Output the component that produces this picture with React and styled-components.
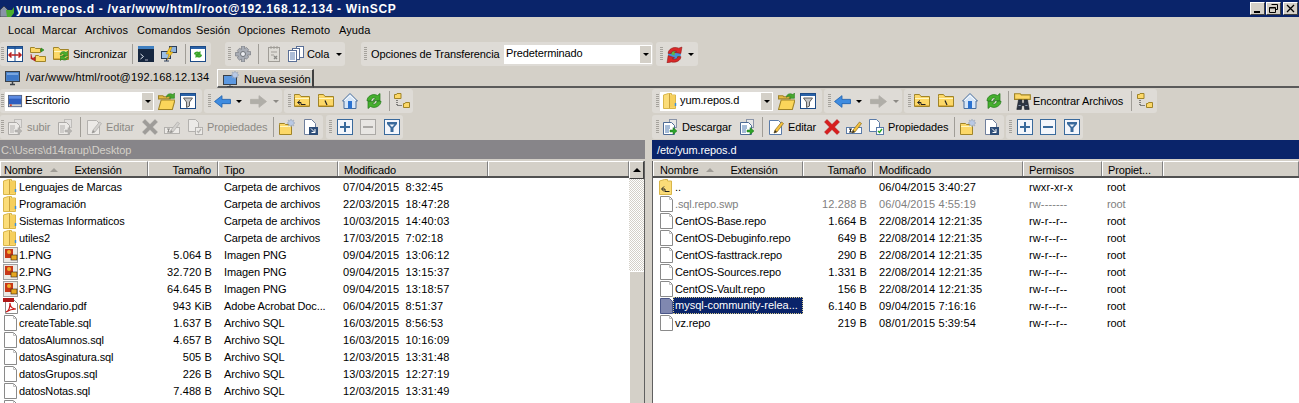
import React from 'react';
import styled, { createGlobalStyle } from 'styled-components';

const GlobalStyle = createGlobalStyle`
    html, body {
        margin: 0;
        padding: 0;
        background: #d4d0c8;
    }
    body {
        font-family: "Liberation Sans", Arial, sans-serif;
        font-size: 11px;
        letter-spacing: -0.12px;
        color: #000;
    }
`;

// Window chrome
const Window = styled.div`
    display: flex;
    flex-direction: column;
    width: 1299px;
    height: 403px;
    overflow: hidden;
    background: #d4d0c8;
`;

const TitleBar = styled.div`
    display: flex;
    align-items: center;
    flex: none;
    height: 17px;
    background: #0a246a;
    color: #fff;
    font-weight: bold;
    padding-right: 1px;
`;

const TitleText = styled.span`
    flex: 1;
    margin-left: 1px;
    font-size: 12px;
    letter-spacing: 0.68px;
`;

const WinButton = styled.div`
    display: flex;
    align-items: center;
    justify-content: center;
    width: 15px;
    height: 13px;
    margin-left: ${p => p.$ml || 0}px;
    background: #d4d0c8;
    border-top: 1px solid #fff;
    border-left: 1px solid #fff;
    border-right: 1px solid #404040;
    border-bottom: 1px solid #404040;
    box-sizing: border-box;
`;

const MenuBar = styled.div`
    display: flex;
    flex: none;
    align-items: center;
    height: 25px;
    padding-left: 8px;
`;

const MenuItem = styled.span`
    width: ${p => p.$w}px;
    letter-spacing: 0.1px;
`;

const ToolRow = styled.div`
    display: flex;
    flex: none;
    height: 24px;
    margin-bottom: ${p => p.$mb || 0}px;
`;

const Band = styled.div`
    display: flex;
    align-items: center;
    flex: none;
    box-sizing: border-box;
    width: ${p => p.$w}px;
    margin-right: ${p => p.$mr || 0}px;
    padding-left: ${p => p.$pl ?? 1}px;
    background: #dedbd6;
    border-radius: 3px;
`;

const Grip = styled.i`
    flex: none;
    width: 3px;
    height: 14px;
    background: repeating-linear-gradient(#a5a29c 0 1px, transparent 1px 2px);
`;

const Tool = styled.div`
    display: flex;
    align-items: center;
    flex: none;
    padding: 0 ${p => p.$pr ?? 4}px 0 ${p => p.$lp ?? 3}px;
`;

const Label = styled.span`
    flex: none;
    width: ${p => p.$w}px;
    margin-left: ${p => p.$ml ?? 4}px;
    white-space: nowrap;
    color: ${p => (p.$off ? '#8c8a85' : '#000')};
`;

const Sep = styled.i`
    flex: none;
    width: 1px;
    height: 20px;
    margin: 0 ${p => p.$r ?? 1}px 0 ${p => p.$l ?? 4}px;
    background: #a09d97;
`;

const Caret = styled.i`
    flex: none;
    width: 0;
    height: 0;
    margin: 1px ${p => p.$r || 0}px 0 ${p => p.$l || 0}px;
    border-left: 3px solid transparent;
    border-right: 3px solid transparent;
    border-top: 3px solid ${p => (p.$off ? '#8c8a85' : '#000')};
`;

const Select = styled.div`
    display: flex;
    align-items: center;
    flex: none;
    box-sizing: border-box;
    width: ${p => p.$w}px;
    height: 19px;
    margin-left: ${p => p.$ml || 0}px;
    padding-left: ${p => p.$pl || 2}px;
    background: #fff;
`;

const SelectText = styled.span`
    flex: 1;
    margin-left: ${p => p.$ml || 0}px;
    padding-bottom: 2px;
`;

const SelectArrow = styled.div`
    display: flex;
    align-items: center;
    justify-content: center;
    width: 11px;
    height: 17px;
    margin-right: 1px;
    background: #d4d0c8;
`;

// Tabs
const TabStrip = styled.div`
    display: flex;
    flex: none;
    height: 22px;
`;

const ActiveTab = styled.div`
    display: flex;
    align-items: flex-start;
    box-sizing: border-box;
    width: 217px;
    padding: 4px 0 0 5px;
`;

const IdleTab = styled.div`
    display: flex;
    align-items: flex-start;
    box-sizing: border-box;
    width: 97px;
    height: 19px;
    margin-top: 3px;
    padding: 1px 0 0 5px;
    background: #d4d0c8;
    border-top: 1px solid #fff;
    border-left: 1px solid #fff;
    border-right: 2px solid #404040;
    border-bottom: 2px solid #5a5a5a;
`;

const TabText = styled.span`
    margin-top: ${p => p.$mt || 1}px;
    margin-left: ${p => p.$ml}px;
    white-space: nowrap;
    letter-spacing: ${p => p.$ls ?? 0.14}px;
`;

const TabFill = styled.div`
    flex: 1;
    border-bottom: 2px solid #5a5a5a;
`;

// Panels
const Panels = styled.div`
    display: flex;
    flex: 1;
    min-height: 0;
    padding-top: 1px;
`;

const Panel = styled.section`
    display: flex;
    flex-direction: column;
    flex: none;
    width: ${p => p.$w}px;
    min-width: 0;
`;

const Splitter = styled.div`
    flex: none;
    width: 7px;
`;

const PathBar = styled.div`
    flex: none;
    height: 19px;
    line-height: 21px;
    padding-left: ${p => p.$pl}px;
    margin-top: 1px;
    background: ${p => (p.$active ? '#0a246a' : '#878589')};
    color: ${p => (p.$active ? '#fff' : '#d4d0c8')};
`;

const ListFrame = styled.div`
    display: flex;
    flex: 1;
    min-height: 0;
    margin-top: 2px;
    background: #fff;
    border-left: ${p => (p.$framed ? '1px solid #606060' : 'none')};
    border-right: ${p => (p.$scroll ? '1px solid #606060' : 'none')};
`;

const ListBody = styled.div`
    flex: 1;
    min-width: 0;
`;

const HeaderRow = styled.div`
    display: flex;
    box-sizing: border-box;
    height: 17px;
    background: #d4d0c8;
    border-bottom: 2px solid #505050;
`;

const HeaderCell = styled.div`
    display: flex;
    align-items: center;
    box-sizing: border-box;
    width: ${p => p.$w}px;
    flex: ${p => (p.$w ? 'none' : 1)};
    padding-left: ${p => p.$pl ?? 5}px;
    padding-right: 6px;
    padding-top: 1px;
    justify-content: ${p => (p.$right ? 'flex-end' : 'flex-start')};
    border-top: 1px solid #fff;
    border-left: 1px solid #fff;
    border-right: 1px solid #808080;
`;

const SortMark = styled.i`
    width: 0;
    height: 0;
    margin: 0 16px 0 8px;
    border-left: 4px solid transparent;
    border-right: 4px solid transparent;
    border-bottom: 4px solid #a09d97;
`;

const FileRow = styled.div`
    display: flex;
    align-items: center;
    height: 17px;
    color: ${p => (p.$dim ? '#808080' : '#000')};
`;

const NameCell = styled.div`
    display: flex;
    align-items: center;
    flex: none;
    box-sizing: border-box;
    width: ${p => p.$w}px;
    padding-left: ${p => p.$pl}px;
`;

const NameText = styled.span`
    white-space: nowrap;
    ${p => p.$selected && `
        box-sizing: border-box;
        width: 130px;
        height: 17px;
        margin-left: -2px;
        padding: 0 1px;
        line-height: 15px;
        color: #fff;
        background: #0a246a;
        border: 1px dotted #d4c98a;
        letter-spacing: 0px;
    `}
`;

const Cell = styled.div`
    flex: none;
    box-sizing: border-box;
    width: ${p => p.$w}px;
    padding-left: ${p => p.$pl ?? 6}px;
    padding-right: ${p => (p.$right ? 6 : 0)}px;
    text-align: ${p => (p.$right ? 'right' : 'left')};
    letter-spacing: ${p => (p.$num ? '0.12px' : 'inherit')};
    white-space: pre;
    overflow: hidden;
`;

const Scrollbar = styled.div`
    display: flex;
    flex-direction: column;
    flex: none;
    box-sizing: border-box;
    width: 15px;
    height: 100%;
`;

const ScrollButton = styled.div`
    display: flex;
    align-items: center;
    justify-content: center;
    flex: none;
    height: 16px;
    background: #d4d0c8;
    border-top: 1px solid #fff;
    border-left: 1px solid #fff;
    border-right: 1px solid #404040;
    border-bottom: 1px solid #404040;
`;

const ScrollTrack = styled.div`
    flex: none;
    height: 92px;
    background: repeating-conic-gradient(#fff 0 25%, #d4d0c8 0 50%) 0 0 / 2px 2px;
`;

const ScrollThumb = styled.div`
    flex: 1;
    background: #d4d0c8;
    border-top: 1px solid #fff;
    border-left: 1px solid #fff;
`;

const UpArrow = styled.i`
    width: 0;
    height: 0;
    border-left: 4px solid transparent;
    border-right: 4px solid transparent;
    border-bottom: 4px solid #000;
`;

const Svg = styled.svg`
    display: block;
    flex: none;
    ${p => p.$off && 'filter: grayscale(1) opacity(0.42);'}
`;

const AppMark = styled(Svg)`
    align-self: flex-end;
`;

const folder = (
    <>
        <path d="M.5 3.500v-2h5l1.500 2h8.500v10H.5z" fill="#fcd868" stroke="#a08428" />
        <path d="M1 5.500h14" stroke="#fff6c0" />
        <path d="M1 12.500h14" stroke="#e0b040" />
    </>
);

const greenArrows = (
    <>
        <path d="M7 8.500c.5-3 4-4 6-2l1.500-1.500v5h-5l1.500-1.500c-1-1-2.500-1-3 .5z" fill="#4caf2e" stroke="#23761a" strokeWidth=".6" />
        <path d="M15 11c-.5 3-4 4-6 2l-1.500 1.500v-4.500h5L11 11.500c1 1 2.500 1 3-.5z" fill="#4caf2e" stroke="#23761a" strokeWidth=".6" />
    </>
);

const doc = (
    <path d="M2.500.5h7l4 4v11h-11z" fill="#fff" stroke="#6f7f9c" />
);

const pencil = (
    <>
        <path d="M7 11l6.500-8 2 1.500L9 13l-3 1z" fill="#f5c23e" stroke="#8a6a1c" strokeWidth=".7" />
        <path d="M6 14l1-3 2 2z" fill="#333" />
    </>
);

const framed = inner => (
    <>
        <rect x=".5" y=".5" width="15" height="15" fill="#f4f6fb" stroke="#3a6a9c" />
        {inner}
    </>
);

const ICONS = {
    compare: (
        <>
            <rect x=".5" y=".5" width="15" height="15" fill="#fff" stroke="#1c4a86" />
            <rect x="1" y="1" width="14" height="2" fill="#2a62a8" />
            <path d="M8 1v14" stroke="#1c4a86" />
            <path d="M2 9h12M4.500 6.500 2 9l2.500 2.500M11.500 6.500 14 9l-2.500 2.500" stroke="#b82020" strokeWidth="1.500" fill="none" />
        </>
    ),
    syncFolders: (
        <>
            <path d="M.5 6.500v-5h4l1 1h5v4z" fill="#fcd868" stroke="#a08428" />
            <path d="M5.500 15.500v-6h3l1 1h6v5z" fill="#fcd868" stroke="#a08428" />
            <path d="M11 2l3 2-3 2zM11 4h-1" fill="#3ba52a" stroke="#23761a" strokeWidth=".6" />
            <path d="M5 11l-3 2 3 2zM1 8v5h2" fill="#d02424" stroke="#a01818" strokeWidth=".6" />
        </>
    ),
    folderSync: <>{folder}{greenArrows}</>,
    terminal: (
        <>
            <rect width="16" height="16" fill="#16263e" />
            <rect width="16" height="3" fill="#3f7fc0" />
            <path d="M2.500 8l3 2.500-3 2.500" stroke="#dfe6ee" fill="none" />
            <path d="M7 14h3" stroke="#aab" />
        </>
    ),
    putty: (
        <>
            <rect x="8.500" y=".5" width="7" height="6" fill="#8fb4dc" stroke="#2c3e5a" />
            <rect x=".5" y="5.500" width="9" height="7" fill="#9cc0e6" stroke="#2c3e5a" />
            <path d="M3 15h5M5.500 12.500V15" stroke="#2c3e5a" />
            <path d="M9 1 5 8h3l-2 6 6-8H9l2-5z" fill="#f5c828" stroke="#a87c10" strokeWidth=".5" />
        </>
    ),
    syncBox: (
        <>
            <rect x=".5" y=".5" width="15" height="15" fill="#fff" stroke="#1c4a86" />
            <rect x="1" y="1" width="14" height="2" fill="#2a62a8" />
            <path d="M4 8c0-2 3-3.500 5-2l1.500-1v4h-4l1-1c-1-.5-2 0-2 1z" fill="#3ba52a" />
            <path d="M12 9c0 2-3 3.500-5 2l-1.500 1V8h4l-1 1c1 .5 2 0 2-1z" fill="#3ba52a" />
        </>
    ),
    gear: (
        <>
            <path d="M6.500 0h3v2.500l2-1 2.200 2.200-1.200 1.800h3v3.500h-3l1.200 2-2.200 2.200-2-1.200V16h-3v-3l-2 1.200L2.300 12l1.200-2H.5V6.500h3L2.300 4.500 4.500 2.300l2 1z" fill="#a9adb5" stroke="#6e7278" strokeWidth=".6" />
            <circle cx="8" cy="8" r="2.500" fill="#eceef2" stroke="#6e7278" />
        </>
    ),
    checklist: (
        <>
            <rect x="2.500" y="1.500" width="11" height="14" fill="#dedcd6" stroke="#a09d97" />
            <path d="M5 0v3M8 0v3M11 0v3M5 6h6M5 9h3" stroke="#a09d97" />
            <path d="M8 10l3 3M11 10l-3 3" stroke="#8a8a86" strokeWidth="1.400" />
        </>
    ),
    queue: (
        <>
            <rect x="8.500" y=".5" width="7" height="11" fill="#fff" stroke="#5a6f96" />
            <rect x="4.500" y="2.500" width="7" height="11" fill="#fff" stroke="#5a6f96" />
            <rect x=".5" y="4.500" width="8" height="11" fill="#fff" stroke="#5a6f96" />
            <path d="M2 7h5M2 9h5M2 11h5M2 13h5" stroke="#5a7cb0" />
        </>
    ),
    globeSync: (
        <>
            <circle cx="8" cy="8" r="6" fill="#4a90d8" />
            <path d="M5 4l4 1-1 4-3-1zM10 10l3-1-1 4z" fill="#5ab848" />
            <path d="M2 7c0-4 5-7 10-5l3-1-1 6-6-1 2-1C7 4 5 5 5 7z" fill="#d82828" stroke="#8a1414" strokeWidth=".5" />
            <path d="M14 10c0 4-5 6-9 5l-4 1 1-7 6 2-2 1c3 1 5 0 5-2z" fill="#d82828" stroke="#8a1414" strokeWidth=".5" />
        </>
    ),
    monitor: (
        <>
            <rect x=".5" y="1.500" width="14" height="10" fill="#4a80c4" stroke="#3a4048" />
            <rect x="2" y="3" width="11" height="7" fill="#3d78c8" />
            <path d="M2 3h11v2H2z" fill="#79a6e0" />
            <path d="M5 14.500h5M7.500 12v2" stroke="#3a4048" strokeWidth="1.500" />
        </>
    ),
    newSession: (
        <>
            <rect x=".5" y="4.500" width="13" height="9" fill="#5c98e0" stroke="#3a4048" />
            <path d="M4 15.500h6M7 14v1" stroke="#3a4048" />
            <path d="M12 0l1 2 2-1-1 2 2 1-2 1 1 2-2-1-1 2-1-2-2 1 1-2-2-1 2-1-1-2 2 1z" fill="#b9c9e4" stroke="#8795ad" strokeWidth=".4" />
        </>
    ),
    desktop: (
        <>
            <rect x=".5" y="1.500" width="14" height="12" fill="#2f5fc0" stroke="#506080" />
            <rect x="1" y="11" width="13" height="2" fill="#d4d0c8" />
            <rect x="2" y="11" width="2" height="2" fill="#d04030" />
            <path d="M1 2h13v3H1z" fill="#5d8ae0" />
        </>
    ),
    openFolder: (
        <>
            <path d="M.5 4.500v-2h4l1 1h6v2H.5z" fill="#e8bb40" stroke="#a08428" />
            <path d="M.5 15.500 3 6.500h13l-2.500 9z" fill="#fbd65a" stroke="#a08428" />
            <path d="M8 3c1-2.500 4-3 6-1.500L15.500 0v5h-5l1.500-1.500C10.500 2.500 9 3 8 4z" fill="#46a82e" stroke="#23761a" strokeWidth=".5" />
        </>
    ),
    filter: (
        <>
            <rect x=".5" y=".5" width="15" height="15" fill="#fff" stroke="#1c4a86" />
            <rect x="1" y="1" width="14" height="2" fill="#2a62a8" />
            <path d="M3.500 5h9L9.500 9v4l-3 1.500V9z" fill="#c4c4c4" stroke="#5e5e5e" />
        </>
    ),
    back: <path d="M.5 8l7-5.500V6h8v4h-8v3.500z" fill="#3f8ce0" stroke="#1f62b0" strokeWidth=".8" />,
    forward: <path d="M15.500 8l-7-5.500V6H.5v4h8v3.500z" fill="#b0aea8" stroke="#b0aea8" strokeWidth=".8" />,
    parentDir: (
        <>
            {folder}
            <path d="M6 7.500 3.500 9.500 6 11.500M4 9.500h3v2h4.500" fill="none" stroke="#222" />
        </>
    ),
    rootDir: (
        <>
            {folder}
            <path d="M7 7.500l2 4.500" stroke="#222" strokeWidth="1.200" />
        </>
    ),
    home: (
        <>
            <path d="M.5 8 8 .5 15.500 8H14v7.500H2V8z" fill="#d6e6f8" stroke="#4a6f9c" />
            <path d="M2.500 7.500 8 2.500l5.500 5" fill="none" stroke="#fff" />
            <rect x="6" y="8" width="4" height="7.500" fill="#2a72d0" />
        </>
    ),
    refresh: (
        <>
            <path d="M1 8C1 3 7 0 11.500 2.500L14 .5v7H7l2.500-2.500C7 4 5 6 5 8z" fill="#46b02e" stroke="#23761a" strokeWidth=".7" />
            <path d="M15 8c0 5-6 8-10.500 5.500L2 15.500v-7h7l-2.500 2.500c2.500 1 4.500-1 4.500-3z" fill="#46b02e" stroke="#23761a" strokeWidth=".7" />
        </>
    ),
    tree: (
        <>
            <path d="M.5 5.500v-4h2l.5-1h4v5z" fill="#fcd868" stroke="#a08428" />
            <path d="M9.500 14.500v-4h1.500l.5-1h4v5z" fill="#fcd868" stroke="#a08428" />
            <path d="M3 7v5.500h5" stroke="#222" strokeDasharray="1 1" fill="none" />
        </>
    ),
    sendDoc: (
        <>
            <rect x="7.500" y=".5" width="7" height="8" fill="#e8e8e8" stroke="#8a94a8" />
            <path d="M1.500 3.500h8l3 3v9h-11z" fill="#fff" stroke="#4d6a94" />
            <path d="M3 7h5M3 9h5M3 11h4M3 13h4" stroke="#4d78b0" />
            <path d="M8 11h3V8.500l4 3.500-4 3.500V13H8z" fill="#2ea32a" stroke="#1f7a1c" strokeWidth=".5" />
        </>
    ),
    editDoc: (
        <>
            <path d="M1.500 1.500h9l3 3v11h-12z" fill="#fff" stroke="#5a7ba8" />
            {pencil}
        </>
    ),
    cross: <path d="M.5 3 3 .5l5 5 5-5L15.500 3l-5 5 5 5-2.500 2.500-5-5-5 5L.5 13l5-5z" fill="#d81e1e" stroke="#a81414" strokeWidth=".5" />,
    rename: (
        <>
            <rect x=".5" y="8.500" width="15" height="6" fill="#fff" stroke="#5a7ba8" />
            <path d="M3 10h3M3 13h3M4.500 10v3" stroke="#222" />
            {pencil}
        </>
    ),
    props: (
        <>
            <path d="M1.500.5h7l3 3v9h-10z" fill="#fff" stroke="#5a7ba8" />
            <rect x="8.500" y="8.500" width="7" height="7" fill="#fff" stroke="#5a7ba8" />
            <path d="M10 12l1.500 1.500L14 10" stroke="#28a428" strokeWidth="1.400" fill="none" />
        </>
    ),
    newFolder: (
        <>
            <path d="M.5 5.500v-1h5l1 1h6v10H.5z" fill="#fcd868" stroke="#a08428" />
            <path d="M1 7.500h11" stroke="#fff6c0" />
            <path d="M12 0l1 2 2-1-1 2 2 1-2 1 1 2-2-1-1 2-1-2-2 1 1-2-2-1 2-1-1-2 2 1z" fill="#b9c9e4" stroke="#8795ad" strokeWidth=".4" />
        </>
    ),
    shortcut: (
        <>
            {doc}
            <rect x="7" y="8" width="9" height="8" fill="#2d4d78" />
            <path d="M9 9.500l4 4M13 10v3.500H9.500" stroke="#fff" fill="none" />
        </>
    ),
    plus: framed(<path d="M8 3v10M3 8h10" stroke="#3a6a9c" strokeWidth="2" />),
    minus: framed(<path d="M3 8h10" stroke="#3a6a9c" strokeWidth="2" />),
    filterBox: framed(<path d="M3 3h10v2L9.500 9v4h-3V9L3 5zM5.500 5.500h5L8 8z" fill="#3a6a9c" fillRule="evenodd" />),
    binoculars: (
        <>
            <path d="M.5 6.500v-5h5l1 1h8v4z" fill="#fcd868" stroke="#a08428" />
            <path d="M4 7h3v3h2V7h3l1.500 8.500h-4L9 12H7l-.500 3.500h-4z" fill="#2c3442" stroke="#111820" strokeWidth=".5" />
            <path d="M4 12h2M10 12h2" stroke="#8a9ab0" />
        </>
    ),
    tallFolder: (
        <>
            <path d="M.5 15.500V2l5-1.500h3V2h4v13.500z" fill="#fbdc78" stroke="#d9b64a" />
            <path d="M6.500 15V1" stroke="#caa23c" />
            <path d="M7 2.500h5v12H7z" fill="#f6cf5c" />
            <path d="M12.500 10v3" stroke="#3c8ed8" strokeWidth="1.500" />
        </>
    ),
    upFolder: (
        <>
            <path d="M.5 15.500V2l5-1.500h3V2h4v13.500z" fill="#fbdc78" stroke="#d9b64a" />
            <path d="M5 7.500 2.500 10 5 12.500M3 10h3v2.500h4.500" fill="none" stroke="#222" />
        </>
    ),
    file: (
        <>
            <path d="M1.500.5h9l3 3v12h-12z" fill="#fff" stroke="#8a8a8a" />
            <path d="M10.500.5v3h3" fill="none" stroke="#c0c0c0" />
        </>
    ),
    fileSelected: <path d="M1.500.5h9l3 3v12h-12z" fill="#8088b0" stroke="#4a5688" />,
    png: (
        <>
            <rect x=".5" y=".5" width="14" height="15" fill="#ece9e4" stroke="#a0a0a0" />
            <rect x="2" y="2" width="8" height="9" fill="#c83818" />
            <circle cx="6" cy="5" r="2" fill="#f0b030" />
            <rect x="8" y="8" width="6" height="5" fill="#e8a820" stroke="#302010" strokeWidth=".6" />
        </>
    ),
    pdf: (
        <>
            <path d="M2.500 1.500h8l4 4v10h-12z" fill="#fff" stroke="#8a8a8a" />
            <rect x="0" y="0" width="11" height="4" fill="#b01818" />
            <path d="M3 14c3-1 4-5 4-9 0 4 3 6 6 6-3 0-7 1-10 3z" fill="none" stroke="#c81818" strokeWidth="1.200" />
        </>
    ),
};

const Icon = ({ name, size = 16, off }) => (
    <Svg width={size} height={size} viewBox="0 0 16 16" $off={off}>
        {ICONS[name]}
    </Svg>
);

const COLS_L = [148, 70, 120, 150];
const COLS_R = [150, 70, 150, 79, 61];

const LOCAL = [
    ['tallFolder', 'Lenguajes de Marcas', '', 'Carpeta de archivos', '07/04/2015  8:32:45'],
    ['tallFolder', 'Programación', '', 'Carpeta de archivos', '22/03/2015  18:47:28'],
    ['tallFolder', 'Sistemas Informaticos', '', 'Carpeta de archivos', '10/03/2015  14:40:03'],
    ['tallFolder', 'utiles2', '', 'Carpeta de archivos', '17/03/2015  7:02:18'],
    ['png', '1.PNG', '5.064 B', 'Imagen PNG', '09/04/2015  13:06:12'],
    ['png', '2.PNG', '32.720 B', 'Imagen PNG', '09/04/2015  13:15:37'],
    ['png', '3.PNG', '64.645 B', 'Imagen PNG', '09/04/2015  13:18:57'],
    ['pdf', 'calendario.pdf', '943 KiB', 'Adobe Acrobat Doc...', '06/04/2015  8:51:37'],
    ['file', 'createTable.sql', '1.637 B', 'Archivo SQL', '16/03/2015  8:56:53'],
    ['file', 'datosAlumnos.sql', '4.657 B', 'Archivo SQL', '16/03/2015  10:16:09'],
    ['file', 'datosAsginatura.sql', '505 B', 'Archivo SQL', '12/03/2015  13:31:48'],
    ['file', 'datosGrupos.sql', '226 B', 'Archivo SQL', '13/03/2015  12:27:19'],
    ['file', 'datosNotas.sql', '7.488 B', 'Archivo SQL', '12/03/2015  13:31:49'],
    ['file', '', '', '', ''],
];

const REMOTE = [
    { icon: 'upFolder', name: '..', size: '', date: '06/04/2015 3:40:27', perm: 'rwxr-xr-x' },
    { icon: 'file', name: '.sql.repo.swp', size: '12.288 B', date: '06/04/2015 4:55:19', perm: 'rw-------', dim: true },
    { icon: 'file', name: 'CentOS-Base.repo', size: '1.664 B', date: '22/08/2014 12:21:35', perm: 'rw-r--r--' },
    { icon: 'file', name: 'CentOS-Debuginfo.repo', size: '649 B', date: '22/08/2014 12:21:35', perm: 'rw-r--r--' },
    { icon: 'file', name: 'CentOS-fasttrack.repo', size: '290 B', date: '22/08/2014 12:21:35', perm: 'rw-r--r--' },
    { icon: 'file', name: 'CentOS-Sources.repo', size: '1.331 B', date: '22/08/2014 12:21:35', perm: 'rw-r--r--' },
    { icon: 'file', name: 'CentOS-Vault.repo', size: '156 B', date: '22/08/2014 12:21:35', perm: 'rw-r--r--' },
    { icon: 'fileSelected', name: 'mysql-community-relea...', size: '6.140 B', date: '09/04/2015 7:16:16', perm: 'rw-r--r--', selected: true },
    { icon: 'file', name: 'vz.repo', size: '219 B', date: '08/01/2015 5:39:54', perm: 'rw-r--r--' },
];

const NameHeader = ({ w, pl }) => (
    <HeaderCell $w={w} $pl={pl}>
        Nombre
        <SortMark />
        Extensión
    </HeaderCell>
);

const LocalPanel = () => (
    <Panel $w={645}>
        <ToolRow $mb={2}>
            <Band $w={202} $mr={2}>
                <Grip />
                <Select $w={149} $ml={1} $pl={3}>
                    <Icon name="desktop" size={15} />
                    <SelectText $ml={2}>Escritorio</SelectText>
                    <SelectArrow><Caret /></SelectArrow>
                </Select>
                <Tool $lp={4} $pr={2}><Icon name="openFolder" size={17} /></Tool>
                <Tool><Icon name="filter" /></Tool>
            </Band>
            <Band $w={78} $mr={2} $pl={4}>
                <Grip />
                <Tool $pr={5}><Icon name="back" size={17} /></Tool>
                <Caret $r={8} />
                <Icon name="forward" size={17} />
                <Caret $l={6} $off />
            </Band>
            <Band $w={129} $pl={4}>
                <Grip />
                <Tool $lp={3} $pr={4}><Icon name="parentDir" /></Tool>
                <Tool $lp={4} $pr={4}><Icon name="rootDir" /></Tool>
                <Tool $lp={4} $pr={4}><Icon name="home" /></Tool>
                <Tool $lp={4}><Icon name="refresh" /></Tool>
                <Sep $l={3} $r={1} />
                <Tool><Icon name="tree" /></Tool>
            </Band>
        </ToolRow>
        <ToolRow>
            <Band $w={323} $mr={3}>
                <Grip />
                <Tool $pr={0}><Icon name="sendDoc" off /></Tool>
                <Label $w={30} $off>subir</Label>
                <Tool $lp={0} $pr={0}><Icon name="sendDoc" off /></Tool>
                <Sep $l={7} $r={2} />
                <Tool $pr={0}><Icon name="editDoc" off /></Tool>
                <Label $w={36} $off>Editar</Label>
                <Tool $lp={0} $pr={6}><Icon name="cross" off /></Tool>
                <Tool $lp={0} $pr={7}><Icon name="rename" off /></Tool>
                <Tool $lp={0} $pr={0}><Icon name="props" off /></Tool>
                <Label $w={66} $off>Propiedades</Label>
                <Sep $l={0} $r={2} />
                <Tool $pr={4}><Icon name="newFolder" /></Tool>
                <Tool><Icon name="shortcut" /></Tool>
            </Band>
            <Band $w={77} $pl={3}>
                <Grip />
                <Tool $lp={5} $pr={3}><Icon name="plus" /></Tool>
                <Tool $lp={4} $pr={4}><Icon name="minus" off /></Tool>
                <Tool $lp={4}><Icon name="filterBox" /></Tool>
            </Band>
        </ToolRow>
        <PathBar $pl={1}>C:\Users\d14rarup\Desktop</PathBar>
        <ListFrame $scroll>
            <ListBody>
                <HeaderRow>
                    <NameHeader w={COLS_L[0]} pl={3} />
                    <HeaderCell $w={COLS_L[1]} $right>Tamaño</HeaderCell>
                    <HeaderCell $w={COLS_L[2]}>Tipo</HeaderCell>
                    <HeaderCell $w={COLS_L[3]}>Modificado</HeaderCell>
                    <HeaderCell />
                </HeaderRow>
                {LOCAL.map(([icon, name, size, type, date], i) => (
                    <FileRow key={i}>
                        <NameCell $w={COLS_L[0]} $pl={3}>
                            <Icon name={icon} />
                            <NameText>{name}</NameText>
                        </NameCell>
                        <Cell $w={COLS_L[1]} $right $num>{size}</Cell>
                        <Cell $w={COLS_L[2]}>{type}</Cell>
                        <Cell $w={COLS_L[3]} $pl={5} $num>{date}</Cell>
                    </FileRow>
                ))}
            </ListBody>
            <Scrollbar>
                <ScrollButton><UpArrow /></ScrollButton>
                <ScrollTrack />
                <ScrollThumb />
            </Scrollbar>
        </ListFrame>
    </Panel>
);

const RemotePanel = () => (
    <Panel $w={647}>
        <ToolRow $mb={2}>
            <Band $w={170} $mr={2} $pl={4}>
                <Grip />
                <Select $w={113} $ml={1} $pl={3}>
                    <Icon name="tallFolder" />
                    <SelectText $ml={1}>yum.repos.d</SelectText>
                    <SelectArrow><Caret /></SelectArrow>
                </Select>
                <Tool $lp={5} $pr={2}><Icon name="openFolder" size={17} /></Tool>
                <Tool><Icon name="filter" /></Tool>
            </Band>
            <Band $w={78} $mr={2} $pl={4}>
                <Grip />
                <Tool $pr={5}><Icon name="back" size={17} /></Tool>
                <Caret $r={8} />
                <Icon name="forward" size={17} />
                <Caret $l={6} $off />
            </Band>
            <Band $w={253} $pl={4}>
                <Grip />
                <Tool $pr={4}><Icon name="parentDir" /></Tool>
                <Tool $lp={4} $pr={4}><Icon name="rootDir" /></Tool>
                <Tool $lp={4} $pr={4}><Icon name="home" /></Tool>
                <Tool $lp={4}><Icon name="refresh" /></Tool>
                <Sep $l={2} $r={1} />
                <Tool $pr={0} $lp={4}><Icon name="binoculars" size={18} /></Tool>
                <Label $w={95} $ml={1}>Encontrar Archivos</Label>
                <Sep $l={3} $r={2} />
                <Tool $pr={0}><Icon name="tree" /></Tool>
            </Band>
        </ToolRow>
        <ToolRow>
            <Band $w={352} $mr={2} $pl={4}>
                <Grip />
                <Tool $pr={0}><Icon name="sendDoc" /></Tool>
                <Label $w={54}>Descargar</Label>
                <Tool $lp={3} $pr={0}><Icon name="sendDoc" /></Tool>
                <Sep $l={7} $r={2} />
                <Tool $pr={0}><Icon name="editDoc" /></Tool>
                <Label $w={36}>Editar</Label>
                <Tool $lp={0} $pr={6}><Icon name="cross" /></Tool>
                <Tool $lp={0} $pr={6}><Icon name="rename" /></Tool>
                <Tool $lp={0} $pr={0}><Icon name="props" /></Tool>
                <Label $w={66}>Propiedades</Label>
                <Sep $l={0} $r={2} />
                <Tool $pr={4}><Icon name="newFolder" /></Tool>
                <Tool><Icon name="shortcut" /></Tool>
            </Band>
            <Band $w={77} $pl={3}>
                <Grip />
                <Tool $lp={5} $pr={3}><Icon name="plus" /></Tool>
                <Tool $lp={4} $pr={4}><Icon name="minus" /></Tool>
                <Tool $lp={4}><Icon name="filterBox" /></Tool>
            </Band>
        </ToolRow>
        <PathBar $active $pl={5}>/etc/yum.repos.d</PathBar>
        <ListFrame $framed>
            <ListBody>
                <HeaderRow>
                    <NameHeader w={COLS_R[0]} pl={6} />
                    <HeaderCell $w={COLS_R[1]} $right>Tamaño</HeaderCell>
                    <HeaderCell $w={COLS_R[2]}>Modificado</HeaderCell>
                    <HeaderCell $w={COLS_R[3]}>Permisos</HeaderCell>
                    <HeaderCell $w={COLS_R[4]}>Propiet...</HeaderCell>
                    <HeaderCell />
                </HeaderRow>
                {REMOTE.map(f => (
                    <FileRow key={f.name} $dim={f.dim}>
                        <NameCell $w={COLS_R[0]} $pl={6}>
                            <Icon name={f.icon} />
                            <NameText $selected={f.selected}>{f.name}</NameText>
                        </NameCell>
                        <Cell $w={COLS_R[1]} $right $num>{f.size}</Cell>
                        <Cell $w={COLS_R[2]} $num>{f.date}</Cell>
                        <Cell $w={COLS_R[3]} $num>{f.perm}</Cell>
                        <Cell $w={COLS_R[4]} $pl={5}>root</Cell>
                    </FileRow>
                ))}
            </ListBody>
        </ListFrame>
    </Panel>
);

const App = () => (
    <Window>
        <GlobalStyle />
        <TitleBar>
            <AppMark width="15" height="13" viewBox="0 0 15 13">
                <path d="M0 6l4-4 4 4v7H0z" fill="#8a94a8" stroke="#222" strokeWidth=".6" />
                <path d="M6 6h6l2-3v6l-3 4H7z" fill="#4caf2e" />
            </AppMark>
            <TitleText>yum.repos.d - /var/www/html/root@192.168.12.134 - WinSCP</TitleText>
            <WinButton><Svg width="9" height="9"><path d="M1 7h6v2H1z" fill="#000" /></Svg></WinButton>
            <WinButton $ml={1}><Svg width="9" height="9"><path d="M2.500.5h6v5h-2M.5 3.500h6v5h-6zM.5 4h6" fill="none" stroke="#000" /></Svg></WinButton>
            <WinButton $ml={2}><Svg width="9" height="9"><path d="M1 1l7 7M8 1 1 8" stroke="#000" strokeWidth="1.300" /></Svg></WinButton>
        </TitleBar>
        <MenuBar>
            <MenuItem $w={34}>Local</MenuItem>
            <MenuItem $w={43}>Marcar</MenuItem>
            <MenuItem $w={52}>Archivos</MenuItem>
            <MenuItem $w={59}>Comandos</MenuItem>
            <MenuItem $w={42}>Sesión</MenuItem>
            <MenuItem $w={53}>Opciones</MenuItem>
            <MenuItem $w={48}>Remoto</MenuItem>
            <MenuItem $w={40}>Ayuda</MenuItem>
        </MenuBar>
        <ToolRow>
            <Band $w={211} $mr={14}>
                <Grip />
                <Tool><Icon name="compare" /></Tool>
                <Tool><Icon name="syncFolders" /></Tool>
                <Tool $pr={0}><Icon name="folderSync" /></Tool>
                <Label $w={56}>Sincronizar</Label>
                <Sep $l={3} $r={2} />
                <Tool><Icon name="terminal" /></Tool>
                <Tool><Icon name="putty" /></Tool>
                <Sep $r={1} />
                <Tool><Icon name="syncBox" /></Tool>
            </Band>
            <Band $w={120} $mr={16} $pl={3}>
                <Grip />
                <Tool $lp={4}><Icon name="gear" /></Tool>
                <Sep $l={3} $r={2} />
                <Tool $lp={5} $pr={6}><Icon name="checklist" /></Tool>
                <Tool $lp={0} $pr={0}><Icon name="queue" /></Tool>
                <Label $w={25} $ml={3}>Cola</Label>
                <Caret $l={4} />
            </Band>
            <Band $w={292} $mr={3} $pl={3}>
                <Grip />
                <Label $w={133} $ml={4}>Opciones de Transferencia</Label>
                <Select $w={148}>
                    <SelectText>Predeterminado</SelectText>
                    <SelectArrow><Caret /></SelectArrow>
                </Select>
            </Band>
            <Band $w={42} $pl={4}>
                <Grip />
                <Tool $pr={5}><Icon name="globeSync" size={17} /></Tool>
                <Caret />
            </Band>
        </ToolRow>
        <TabStrip>
            <ActiveTab>
                <Icon name="monitor" />
                <TabText $ml={5}>/var/www/html/root@192.168.12.134</TabText>
            </ActiveTab>
            <IdleTab>
                <Icon name="newSession" />
                <TabText $ml={5} $mt={2} $ls={0}>Nueva sesión</TabText>
            </IdleTab>
            <TabFill />
        </TabStrip>
        <Panels>
            <LocalPanel />
            <Splitter />
            <RemotePanel />
        </Panels>
    </Window>
);

export default App;
